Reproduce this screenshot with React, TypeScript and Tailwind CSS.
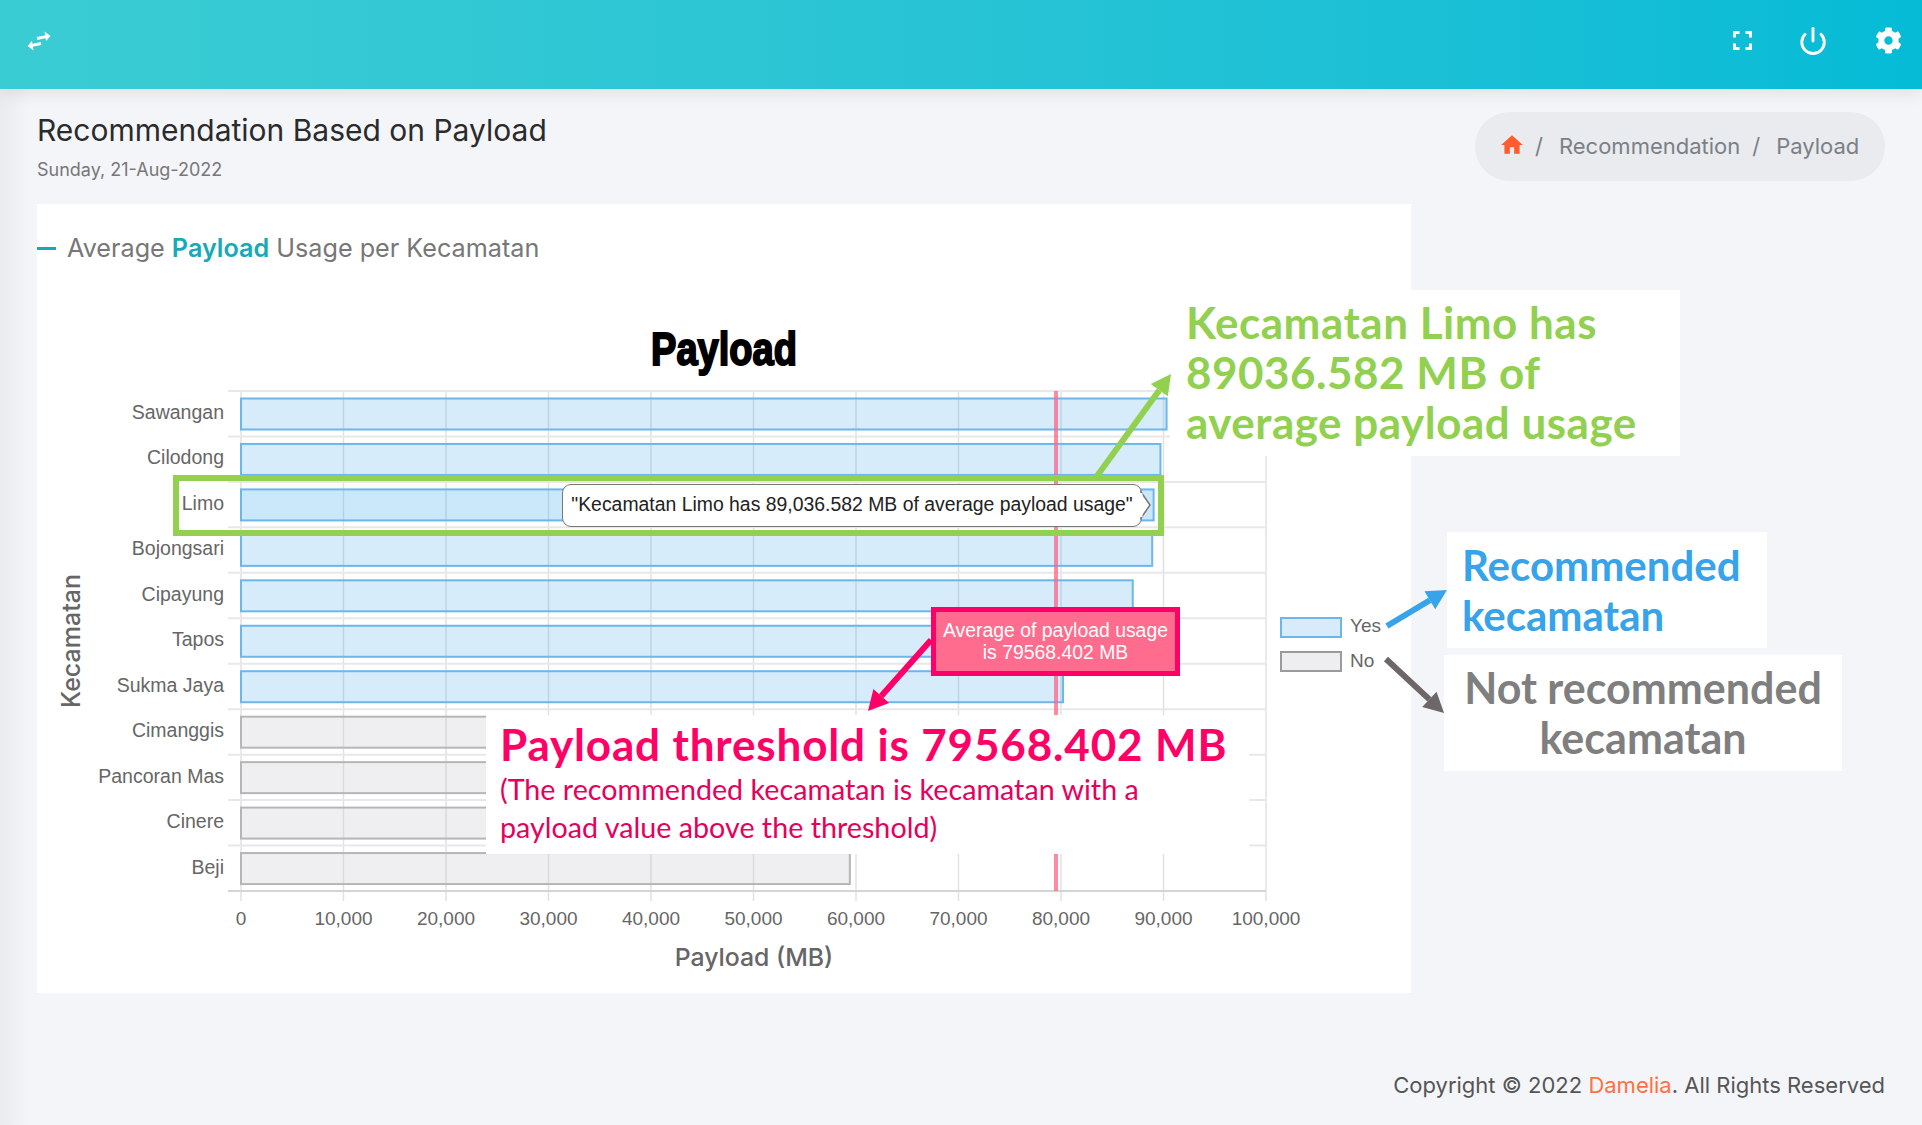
import React from "react";
import { MdHome } from "react-icons/md";
import { FaCog } from "react-icons/fa";
import { Power } from "lucide-react";

const rows = [
  { name: "Sawangan", value: 90300, yes: true },
  { name: "Cilodong", value: 89700, yes: true },
  { name: "Limo", value: 89036, yes: true },
  { name: "Bojongsari", value: 88900, yes: true },
  { name: "Cipayung", value: 87000, yes: true },
  { name: "Tapos", value: 83000, yes: true },
  { name: "Sukma Jaya", value: 80200, yes: true },
  { name: "Cimanggis", value: 78000, yes: false },
  { name: "Pancoran Mas", value: 75000, yes: false },
  { name: "Cinere", value: 70000, yes: false },
  { name: "Beji", value: 59400, yes: false },
];

const ticks = [0, 1, 2, 3, 4, 5, 6, 7, 8, 9, 10];
const X0 = 241;
const PX = 1025 / 100000;
const TOP = 391;
const ROW = 500 / 11;

const Chart = () => (
  <svg
    width="1374"
    height="728"
    viewBox="37 265 1374 728"
    className="block font-['Liberation_Sans',Arial,sans-serif]"
  >
    <text x="724" y="349" textAnchor="middle" dominantBaseline="central" fontSize="46" fontWeight="700" textLength="146" lengthAdjust="spacingAndGlyphs" stroke="#000" strokeWidth="2" fill="#000">
      Payload
    </text>

    {ticks.map((t) => (
      <line key={t} x1={X0 + t * 102.5} x2={X0 + t * 102.5} y1={TOP} y2={TOP + 510} stroke="#e2e2e2" strokeWidth="1.5" />
    ))}
    {rows.map((r, i) => (
      <line key={r.name} x1="228" x2="1266" y1={TOP + i * ROW} y2={TOP + i * ROW} stroke="#e8e8e8" strokeWidth="2" />
    ))}
    <line x1="228" x2="1266" y1={TOP + 500} y2={TOP + 500} stroke="#d4d4d4" strokeWidth="2" />

    {rows.map((r, i) => (
      <g key={r.name}>
        <rect
          x={X0}
          y={TOP + i * ROW + 7.5}
          width={r.value * PX}
          height="31"
          fill={r.yes ? "#36a2eb" : "#c9cbcf"}
          fillOpacity={r.name === "Limo" ? 0.26 : r.yes ? 0.2 : 0.3}
          stroke={r.yes ? "#6cb6ea" : "#b5b6b8"}
          strokeWidth="2"
        />
        <text x="224" y={TOP + i * ROW + 21} textAnchor="end" dominantBaseline="central" fontSize="19.5" fill="#666">
          {r.name}
        </text>
      </g>
    ))}

    <line x1="1056" x2="1056" y1={TOP} y2={TOP + 500} stroke="#ff6384" strokeOpacity="0.75" strokeWidth="4" />

    {ticks.map((t) => (
      <text key={t} x={X0 + t * 102.5} y="918" textAnchor="middle" dominantBaseline="central" fontSize="19" fill="#666">
        {(t * 10000).toLocaleString("en-US")}
      </text>
    ))}

    <text x="754" y="957" textAnchor="middle" dominantBaseline="central" fontSize="24.8" fontWeight="500" fill="#666" className="font-['Inter',sans-serif]">
      Payload (MB)
    </text>
    <text x="71" y="641" textAnchor="middle" dominantBaseline="central" fontSize="25" fontWeight="500" fill="#666" transform="rotate(-90 71 641)" className="font-['Inter',sans-serif]">
      Kecamatan
    </text>

    <rect x="1281" y="618" width="60" height="19" fill="#d7ebfa" stroke="#6cb6ea" strokeWidth="2" />
    <text x="1350" y="625" dominantBaseline="central" fontSize="19" fill="#666">Yes</text>
    <rect x="1281" y="652" width="60" height="19" fill="#eeeef0" stroke="#9a9a9a" strokeWidth="2" />
    <text x="1350" y="660" dominantBaseline="central" fontSize="19" fill="#666">No</text>
  </svg>
);

const Arrow = ({ x1, y1, x2, y2, color, width = 6, head = 20 }: { x1: number; y1: number; x2: number; y2: number; color: string; width?: number; head?: number }) => {
  const a = Math.atan2(y2 - y1, x2 - x1);
  const bx = x2 - head * Math.cos(a);
  const by = y2 - head * Math.sin(a);
  const nx = (-Math.sin(a) * head) / 1.9;
  const ny = (Math.cos(a) * head) / 1.9;
  return (
    <g>
      <line x1={x1} y1={y1} x2={bx} y2={by} stroke={color} strokeWidth={width} />
      <polygon points={`${x2},${y2} ${bx + nx},${by + ny} ${bx - nx},${by - ny}`} fill={color} />
    </g>
  );
};

const App = () => {
  return (
    <div className="relative h-[1125px] overflow-hidden bg-[#f4f5f9] font-['Inter',sans-serif]">
      <div className="absolute left-0 top-0 h-full w-[30px] bg-linear-to-r from-[#eaebef] to-[#f4f5f9]" />

      <header className="relative flex h-[89px] items-center justify-between bg-linear-to-r from-[#3accd3] to-[#04bbd6] pl-[27px] pr-[20px] shadow-[0_6px_14px_rgba(0,0,0,0.07)]">
        <svg width="24" height="20" viewBox="0 0 24 20" className="mt-[-8px]">
          <path d="M10 7.5 19 5.6M14 12.5 5 14.4" stroke="#fff" strokeWidth="3" fill="none" />
          <path d="M23.5 5 17.5.5 19 10zM.5 15l6 4.5L5 10z" fill="#fff" />
        </svg>
        <div className="mt-[-8px] flex items-center text-white">
          <svg width="19" height="19" viewBox="0 0 19 19" fill="none" stroke="#fff" strokeWidth="3">
            <path d="M1.5 6.5v-5h5M12.5 1.5h5v5M17.5 12.5v5h-5M6.5 17.5h-5v-5" />
          </svg>
          <Power size={30} strokeWidth={2.3} className="ml-[46px]" />
          <FaCog size={27} className="ml-[47px]" />
        </div>
      </header>

      <main className="relative px-[37px]">
        <div className="flex items-start justify-between pt-[23px]">
          <div>
            <h1 className="text-[30px] leading-[36px] text-[#2b2b2b]">Recommendation Based on Payload</h1>
            <p className="mt-[11px] text-[18px] leading-[22px] text-[#777]">Sunday, 21-Aug-2022</p>
          </div>
          <nav className="flex h-[69px] w-[410px] items-center rounded-[35px] bg-[#e9ebee] pl-[24px] text-[22px] text-[#7b7f86]">
            <MdHome size={26} className="mt-[-3px] text-[#ff5b2e]" />
            <span className="ml-[10px]">/</span>
            <span className="ml-[16px]">Recommendation</span>
            <span className="ml-[12px]">/</span>
            <span className="ml-[16px]">Payload</span>
          </nav>
        </div>

        <section className="mt-[23px] h-[789px] w-[1374px] bg-white pt-[27px]">
          <div className="flex h-[34px] items-center">
            <span className="h-[3px] w-[19px] bg-[#16a9b9]" />
            <h2 className="ml-[11px] text-[25.2px] leading-[32px] text-[#777]">
              Average <span className="font-semibold text-[#16a9b9]">Payload</span> Usage per Kecamatan
            </h2>
          </div>
          <Chart />
        </section>

        <footer className="mt-[78px] text-right text-[22px] leading-[28px] text-[#555]">
          Copyright © 2022 <span className="text-[#ff7043]">Damelia</span>. All Rights Reserved
        </footer>
      </main>

      {/* annotations on top of the screenshot */}
      <div className="absolute left-[1170px] top-[290px] h-[166px] w-[510px] bg-white pl-[16px] pt-[7px] font-['Lato',sans-serif] text-[44px] font-bold leading-[50px] tracking-[0.5px] text-[#92d050]">
        Kecamatan Limo has
        <br />
        89036.582 MB of
        <br />
        average payload usage
      </div>
      <div className="absolute left-[1447px] top-[532px] h-[116px] w-[320px] bg-white pl-[15px] pt-[8px] font-['Lato',sans-serif] text-[42px] font-bold leading-[50px] text-[#36a3ea]">
        Recommended
        <br />
        kecamatan
      </div>
      <div className="absolute left-[1444px] top-[655px] h-[116px] w-[398px] bg-white pt-[8px] text-center font-['Lato',sans-serif] text-[43px] font-bold leading-[50px] text-[#7f7f7f]">
        Not recommended
        <br />
        kecamatan
      </div>
      <div className="absolute left-[486px] top-[715px] h-[139px] w-[763px] bg-white pl-[14px] pt-[3px] font-['Lato',sans-serif] text-[#ff0066]">
        <div className="whitespace-nowrap text-[44px] font-bold leading-[52px] tracking-[0.85px]">Payload threshold is 79568.402 MB</div>
        <div className="whitespace-nowrap text-[28.7px] leading-[38px] text-[#e6005c]">
          (The recommended kecamatan is kecamatan with a
          <br />
          payload value above the threshold)
        </div>
      </div>

      <div className="absolute left-[931px] top-[607px] flex h-[69px] w-[249px] flex-col items-center justify-center border-[5px] border-[#ff0066] bg-[#ff6c8e] pb-[2px] font-['Liberation_Sans',Arial,sans-serif] text-[19.4px] leading-[22px] text-white">
        <span>Average of payload usage</span>
        <span>is 79568.402 MB</span>
      </div>

      <div className="absolute left-[173px] top-[475px] h-[61px] w-[991px] border-[6px] border-[#92d050]" />
      <div className="absolute left-[562px] top-[484px] flex h-[43px] w-[580px] items-center justify-center rounded-[9px] border-[1.5px] border-[#777] bg-white pb-[2px] font-['Liberation_Sans',Arial,sans-serif] text-[19.4px] text-[#222]">
        "Kecamatan Limo has 89,036.582 MB of average payload usage"
      </div>

      <svg width="1922" height="1125" viewBox="0 0 1922 1125" className="pointer-events-none absolute left-0 top-0">
        <polygon points="1141,492 1150,505 1141,518" fill="#fff" stroke="#777" strokeWidth="1.5" />
        <rect x="1139" y="493" width="3.5" height="24" fill="#fff" />
        <Arrow x1={1097} y1={476} x2={1171} y2={374} color="#92d050" />
        <Arrow x1={931} y1={640} x2={868} y2={711} color="#ff0066" />
        <Arrow x1={1387} y1={626} x2={1447} y2={590} color="#36a3ea" />
        <Arrow x1={1386} y1={659} x2={1444} y2={713} color="#6d6767" />
      </svg>
    </div>
  );
};

export default App;
